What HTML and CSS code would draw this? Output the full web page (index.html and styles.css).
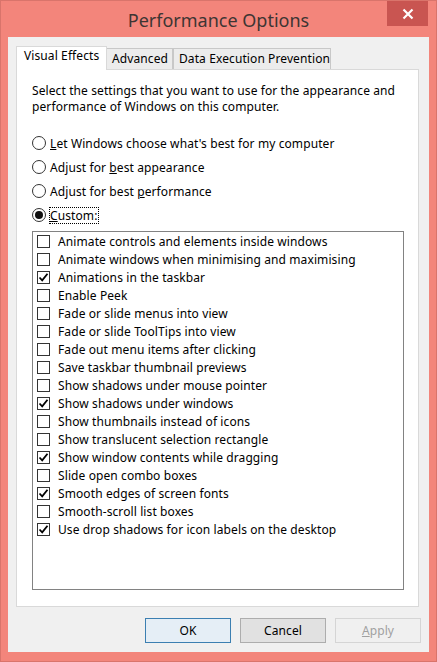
FILE: index.html
```html
<!DOCTYPE html>
<html>
<head>
<meta charset="utf-8">
<link rel="stylesheet" href="styles.css">
</head>
<body>
<div class="window">
  <div class="titlebar">
    <div class="spacer"></div>
    <div class="title">Performance Options</div>
    <div class="close">
      <svg width="12" height="12" viewBox="0 0 12 12"><path d="M1.5 1.5 L10.5 10.5 M10.5 1.5 L1.5 10.5" stroke="#fff" stroke-width="2.2"/></svg>
    </div>
  </div>
  <div class="client">
    <div class="tabs">
      <div class="tab active">Visual Effects</div>
      <div class="tab t-adv">Advanced</div>
      <div class="tab t-dep">Data Execution Prevention</div>
    </div>
    <div class="panel">
      <p class="intro">Select the settings that you want to use for the appearance and performance of Windows on this computer.</p>
      <div class="radios">
        <div class="radio"><span class="rb"></span><span><u>L</u>et Windows choose what's best for my computer</span></div>
        <div class="radio"><span class="rb"></span><span>Adjust for <u>b</u>est appearance</span></div>
        <div class="radio"><span class="rb"></span><span>Adjust for best <u>p</u>erformance</span></div>
        <div class="radio"><span class="rb on"></span><span class="focus"><u>C</u>ustom:</span></div>
      </div>
      <div class="list">
        <div class="item"><span class="cb"></span>Animate controls and elements inside windows</div>
        <div class="item"><span class="cb"></span>Animate windows when minimising and maximising</div>
        <div class="item"><span class="cb on"><svg width="11" height="11" viewBox="0 0 11 11"><path d="M1.5 5.5 L4.2 8.3 L9.5 1.8" fill="none" stroke="#000" stroke-width="1.8"/></svg></span>Animations in the taskbar</div>
        <div class="item"><span class="cb"></span>Enable Peek</div>
        <div class="item"><span class="cb"></span>Fade or slide menus into view</div>
        <div class="item"><span class="cb"></span>Fade or slide ToolTips into view</div>
        <div class="item"><span class="cb"></span>Fade out menu items after clicking</div>
        <div class="item"><span class="cb"></span>Save taskbar thumbnail previews</div>
        <div class="item"><span class="cb"></span>Show shadows under mouse pointer</div>
        <div class="item"><span class="cb on"><svg width="11" height="11" viewBox="0 0 11 11"><path d="M1.5 5.5 L4.2 8.3 L9.5 1.8" fill="none" stroke="#000" stroke-width="1.8"/></svg></span>Show shadows under windows</div>
        <div class="item"><span class="cb"></span>Show thumbnails instead of icons</div>
        <div class="item"><span class="cb"></span>Show translucent selection rectangle</div>
        <div class="item"><span class="cb on"><svg width="11" height="11" viewBox="0 0 11 11"><path d="M1.5 5.5 L4.2 8.3 L9.5 1.8" fill="none" stroke="#000" stroke-width="1.8"/></svg></span>Show window contents while dragging</div>
        <div class="item"><span class="cb"></span>Slide open combo boxes</div>
        <div class="item"><span class="cb on"><svg width="11" height="11" viewBox="0 0 11 11"><path d="M1.5 5.5 L4.2 8.3 L9.5 1.8" fill="none" stroke="#000" stroke-width="1.8"/></svg></span>Smooth edges of screen fonts</div>
        <div class="item"><span class="cb"></span>Smooth-scroll list boxes</div>
        <div class="item"><span class="cb on"><svg width="11" height="11" viewBox="0 0 11 11"><path d="M1.5 5.5 L4.2 8.3 L9.5 1.8" fill="none" stroke="#000" stroke-width="1.8"/></svg></span>Use drop shadows for icon labels on the desktop</div>
      </div>
    </div>
    <div class="buttons">
      <button class="btn default">OK</button>
      <button class="btn">Cancel</button>
      <button class="btn disabled"><u>A</u>pply</button>
    </div>
  </div>
</div>
</body>
</html>
```
FILE: styles.css
```css
* { box-sizing: border-box; }
html, body { margin: 0; padding: 0; }
body {
  width: 437px;
  height: 662px;
  font-family: "Noto Sans", "Open Sans", sans-serif;
  font-size: 12px;
  letter-spacing: 0.1px;
  color: #000;
}
.window {
  width: 437px;
  height: 662px;
  background: #f3857b;
  border: 1px solid #d9746b;
  display: flex;
  flex-direction: column;
}
.titlebar {
  height: 36px;
  display: grid;
  grid-template-columns: 1fr auto 1fr;
}
.title {
  font-size: 18px;
  letter-spacing: 0;
  color: #3d3533;
  align-self: center;
  padding-top: 1px;
}
.close {
  justify-self: end;
  align-self: start;
  width: 41px;
  height: 25px;
  margin-right: 8px;
  background: #c95551;
  display: flex;
  align-items: center;
  justify-content: center;
}
.client {
  margin: 0 7px 0 7px;
  height: 615px;
  background: #f0f0f0;
  padding: 9px 8px 0 8px;
  display: flex;
  flex-direction: column;
}
.tabs {
  display: flex;
  align-items: flex-end;
  height: 23px;
  position: relative;
  z-index: 1;
}
.tab {
  height: 21px;
  border: 1px solid #c8c8c8;
  border-bottom: none;
  background: #ececec;
  padding: 2px 0 0 5px;
  line-height: 16px;
  color: #000;
}
.tab.active {
  height: 24px;
  margin-bottom: -1px;
  width: 91px;
  background: #fff;
  border-color: #d9d9d9;
  padding: 1px 0 0 7px;
}
.t-adv { width: 66px; border-left: none; }
.t-dep { width: 158px; margin-left: 0; }
.panel {
  height: 538px;
  margin-right: 2px;
  background: #fff;
  border: 1px solid #d9d9d9;
  padding: 13px 14px 0 15px;
  display: flex;
  flex-direction: column;
}
.intro {
  margin: 0;
  line-height: 16px;
  padding-left: 0;
}
.radios {
  margin-top: 16px;
  display: flex;
  flex-direction: column;
}
.radio {
  height: 24px;
  display: flex;
  align-items: center;
  gap: 4px;
}
.rb {
  width: 14px;
  height: 14px;
  border: 1px solid #333;
  border-radius: 50%;
  background: #fff;
  display: flex;
  align-items: center;
  justify-content: center;
}
.rb.on::after {
  content: "";
  width: 8px;
  height: 8px;
  border-radius: 50%;
  background: #111;
}
.focus {
  outline: 1px dotted #000;
  outline-offset: 0px;
  padding: 0 1px 0 0;
  line-height: 15px;
}
u { text-decoration: underline; text-underline-offset: 1px; }
.list {
  margin-top: 4px;
  height: 359px;
  border: 1px solid #828282;
  padding: 0 0 0 4px;
  display: flex;
  flex-direction: column;
}
.item {
  height: 18px;
  display: flex;
  align-items: center;
  gap: 8px;
  white-space: nowrap;
}
.cb {
  width: 13px;
  height: 13px;
  border: 1px solid #333;
  background: #fff;
  display: flex;
  align-items: center;
  justify-content: center;
  flex: none;
}
.buttons {
  margin-top: 11px;
  display: flex;
  justify-content: flex-end;
  gap: 9px;
}
.btn {
  width: 86px;
  height: 25px;
  font-family: inherit;
  font-size: 12px;
  letter-spacing: 0.1px;
  background: #e1e1e1;
  border: 1px solid #adadad;
  color: #000;
  padding: 0;
  margin: 0;
}
.btn.default {
  border-color: #3c7fb1;
  background: #e5eef6;
}
.btn.disabled {
  background: #f0f0f0;
  border-color: #d5d5d5;
  color: #a0a0a0;
}
```
